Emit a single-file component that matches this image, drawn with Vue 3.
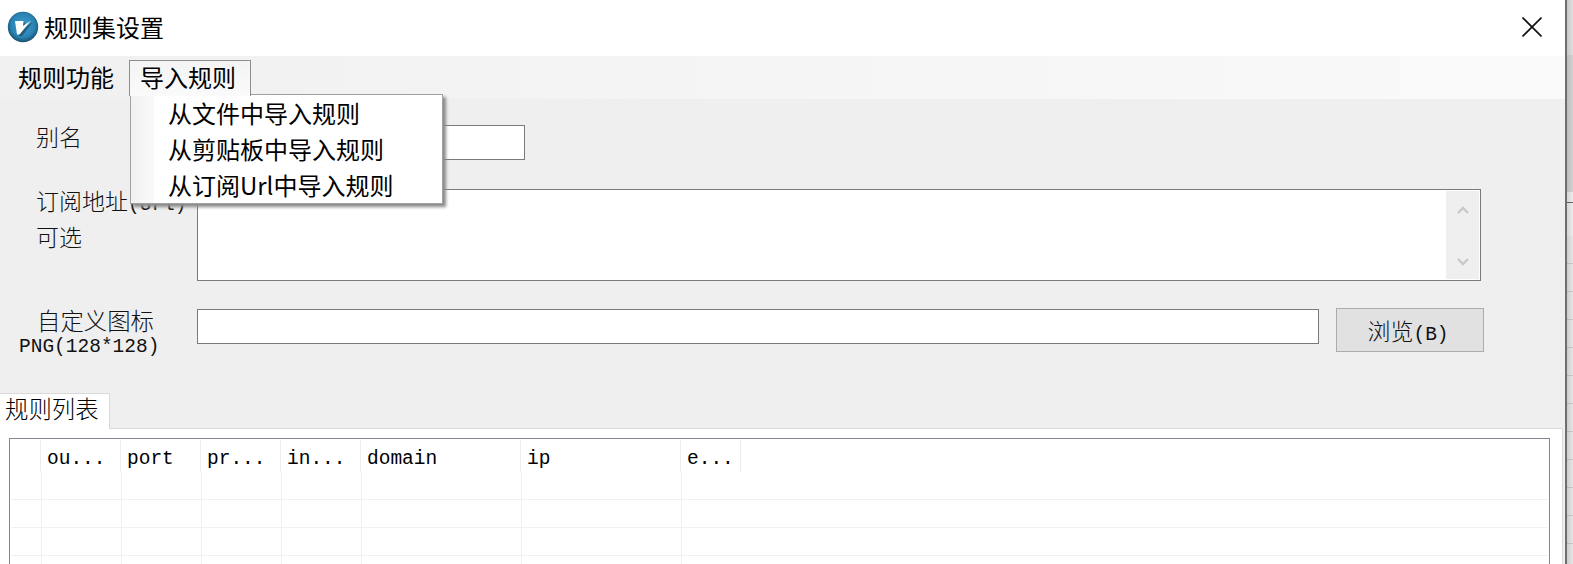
<template>
  <div class="screen">
    <div class="window">
      <div class="titlebar">
        <svg class="logo" viewBox="0 0 32 32" width="32" height="32">
          <defs>
            <radialGradient id="ball" cx="50%" cy="45%" r="55%">
              <stop offset="0%" stop-color="#3b9ccb" />
              <stop offset="70%" stop-color="#2b84b3" />
              <stop offset="100%" stop-color="#17506f" />
            </radialGradient>
          </defs>
          <circle cx="16" cy="16" r="15.2" fill="url(#ball)" />
          <path d="M9 11 L17 10.5 L16.5 16 L25 10 L14 24 L11 24 Z" fill="#12303f" opacity=".5" transform="translate(1 1)" />
          <path d="M8 10 L16.5 10 L16 15 L24 9.5 L12.5 23.5 L10 23.5 Z" fill="#fff" />
        </svg>
        <span class="title">规则集设置</span>
        <svg class="close" viewBox="0 0 20 20" width="20" height="20">
          <path d="M0.5 0.5 L19.5 19.5 M19.5 0.5 L0.5 19.5" stroke="#111" stroke-width="1.6" fill="none" />
        </svg>
      </div>

      <div class="menubar">
        <span class="menu-item">规则功能</span>
        <span class="menu-item open">导入规则</span>
        <div class="dropdown">
          <div v-for="item in importItems" :key="item" class="drop-item">{{ item }}</div>
        </div>
      </div>

      <div class="form">
        <div class="row row-alias">
          <label class="label">别名</label>
          <input class="field alias" type="text" />
        </div>
        <div class="row row-url">
          <label class="label">订阅地址<span class="lat">(Url)</span><br />可选</label>
          <div class="area-wrap">
            <textarea class="area"></textarea>
            <div class="scroll">
              <svg viewBox="0 0 12 8" width="12" height="8"><path d="M1 7 L6 2 L11 7" stroke="#c8c8c8" stroke-width="2.4" fill="none" /></svg>
              <svg viewBox="0 0 12 8" width="12" height="8"><path d="M1 1 L6 6 L11 1" stroke="#c8c8c8" stroke-width="2.4" fill="none" /></svg>
            </div>
          </div>
        </div>
        <div class="row row-icon">
          <label class="label icon-label">
            <span class="icon-line">自定义图标</span>
            <span class="lat png-line">PNG(128*128)</span>
          </label>
          <input class="field icon-path" type="text" />
          <button class="browse">浏览<span class="lat">(B)</span></button>
        </div>
      </div>

      <div class="tabs">
        <div class="tab">规则列表</div>
      </div>
      <div class="panel">
        <div class="grid">
          <div class="grid-head">
            <div class="corner"></div>
            <div v-for="col in columns" :key="col.name" class="head-cell" :style="{ width: col.width + 'px' }">{{ col.name }}</div>
          </div>
          <div v-for="n in 4" :key="n" class="grid-row">
            <div class="corner-cell"></div>
            <div v-for="col in columns" :key="col.name" class="cell" :style="{ width: col.width + 'px' }"></div>
          </div>
        </div>
      </div>
    </div>
    <div class="edge"></div>
  </div>
</template>

<script setup>
const importItems = ['从文件中导入规则', '从剪贴板中导入规则', '从订阅Url中导入规则']

const columns = [
  { name: 'ou...', width: 80 },
  { name: 'port', width: 80 },
  { name: 'pr...', width: 80 },
  { name: 'in...', width: 80 },
  { name: 'domain', width: 160 },
  { name: 'ip', width: 160 },
  { name: 'e...', width: 60 },
]
</script>

<style>
html, body { margin: 0; overflow: hidden; background: #fff; }
</style>

<style scoped>
.screen {
  display: flex;
  width: 1573px;
  height: 564px;
  overflow: hidden;
}

.window {
  width: 1565px;
  flex: none;
  display: flex;
  flex-direction: column;
  background: #efefef;
  font-family: "Noto Sans CJK SC", sans-serif;
  color: #000;
}

.edge {
  flex: 1;
  border-left: 2px solid #6e6e6e;
  background:
    linear-gradient(to right, rgba(0,0,0,.13), rgba(0,0,0,.03)),
    repeating-linear-gradient(to bottom, #ececec 0 27px, #cfcfcf 27px 28px) 0 236px no-repeat,
    linear-gradient(#e6e6e6 0 55px, #d8d8d8 55px 192px, #f4f4f4 192px 202px, #6a6a6a 202px 203px, #f4f4f4 203px);
}

.titlebar {
  height: 56px;
  flex: none;
  display: flex;
  align-items: center;
  background: #fff;
  padding: 0 23px 2px 7px;
  box-sizing: border-box;
}
.logo { flex: none; }
.title { font-size: 24px; margin-left: 5px; line-height: 1; }
.close { margin-left: auto; }

.menubar {
  position: relative;
  height: 43px;
  flex: none;
  display: flex;
  align-items: flex-start;
  padding-left: 5px;
  background: linear-gradient(to right, #f0f0f0, #fafafa);
}
.menu-item {
  font-size: 24px;
  line-height: 32px;
  height: 35px;
  margin-top: 4px;
  padding: 0 12px;
  border: 1px solid transparent;
  border-bottom: 0;
}
.menu-item.open {
  position: relative;
  z-index: 3;
  margin-left: 2px;
  padding-right: 14px;
  padding-left: 10px;
  border-color: #8e8e8e;
  background: linear-gradient(#f4f4f4, #fafafa);
}

.dropdown {
  position: absolute;
  z-index: 2;
  left: 130px;
  top: 38px;
  width: 311px;
  border: 1px solid #a0a0a0;
  background: linear-gradient(to right, #f1f1f1, #f9f9f9 23px, #fff 23px);
  box-shadow: 3px 3px 3px #8a8a8a;
}
.drop-item {
  height: 36px;
  line-height: 36px;
  padding-left: 37px;
  font-size: 24px;
  white-space: nowrap;
}

.form {
  height: 294px;
  flex: none;
  box-sizing: border-box;
  padding-top: 26px;
  display: flex;
  flex-direction: column;
}
.row { display: flex; align-items: flex-start; }
.label {
  width: 197px;
  flex: none;
  box-sizing: border-box;
  padding-left: 36px;
  font-size: 23px;
  font-weight: 300;
  line-height: 36px;
  white-space: nowrap;
  color: #111;
}
.lat {
  font-family: "Liberation Mono", monospace;
  font-size: 19.5px;
  line-height: 1;
}
.field {
  box-sizing: border-box;
  height: 35px;
  border: 1px solid #7a7a7a;
  background: #fff;
  padding: 0;
  outline: none;
}
.row-alias { height: 64px; }
.row-alias .label { margin-top: -7px; }
.alias { width: 328px; }

.row-url { height: 120px; }
.row-url .label { margin-top: -7px; }
.area-wrap {
  width: 1284px;
  height: 92px;
  box-sizing: border-box;
  border: 1px solid #7a7a7a;
  background: #fff;
  display: flex;
  padding: 1px;
}
.area {
  flex: 1;
  border: 0;
  padding: 0;
  resize: none;
  outline: none;
}
.scroll {
  width: 33px;
  display: flex;
  flex-direction: column;
  align-items: center;
  justify-content: space-between;
  padding: 15px 0 13px;
  box-sizing: border-box;
  background: #efefef;
}

.row-icon { height: 84px; }
.icon-label {
  padding-left: 19px;
  display: flex;
  flex-direction: column;
  line-height: 25px;
  margin-top: -1px;
}
.icon-line { padding-left: 18px; font-size: 23.4px; line-height: 25px; }
.png-line { line-height: 24px; margin-top: 2px; }
.icon-path { width: 1122px; }
.browse {
  width: 148px;
  height: 44px;
  margin: -1px 0 0 17px;
  box-sizing: border-box;
  border: 1.5px solid #adadad;
  background: #e1e1e1;
  font-family: "Noto Sans CJK SC", sans-serif;
  font-size: 23px;
  font-weight: 300;
  color: #111;
  padding: 0 4px 0 0;
}

.tabs { height: 35px; flex: none; display: flex; }
.tab {
  width: 110px;
  box-sizing: border-box;
  height: 36px;
  padding-left: 5px;
  background: #fff;
  border-top: 1px solid #d9d9d9;
  border-right: 1px solid #d9d9d9;
  font-size: 23.4px;
  font-weight: 300;
  line-height: 29px;
  position: relative;
  z-index: 1;
}

.panel {
  flex: 1;
  min-height: 0;
  margin-right: 2px;
  background: #fff;
  border-top: 1px solid #d9d9d9;
  border-right: 1px solid #d9d9d9;
  padding: 9px 12px 0 9px;
  overflow: hidden;
}
.grid {
  height: 200px;
  box-sizing: border-box;
  border: 1px solid #828790;
  padding: 1px 1px 0 1px;
}
.grid-head { display: flex; height: 32px; }
.corner { width: 29px; flex: none; }
.head-cell {
  box-sizing: border-box;
  flex: none;
  border-left: 1px solid #ececec;
  padding-left: 6px;
  padding-top: 3px;
  font-family: "Liberation Mono", monospace;
  font-size: 19.5px;
  line-height: 32px;
  white-space: pre;
  overflow: hidden;
}
.head-cell:last-child { border-right: 1px solid #ececec; width: 61px !important; }

.grid-row {
  display: flex;
  height: 28px;
  box-sizing: border-box;
  border-bottom: 1px solid #f0f0f0;
  margin-right: 1px;
}
.corner-cell { width: 30px; flex: none; }
.cell {
  box-sizing: border-box;
  flex: none;
  border-left: 1px solid #f0f0f0;
}
</style>
